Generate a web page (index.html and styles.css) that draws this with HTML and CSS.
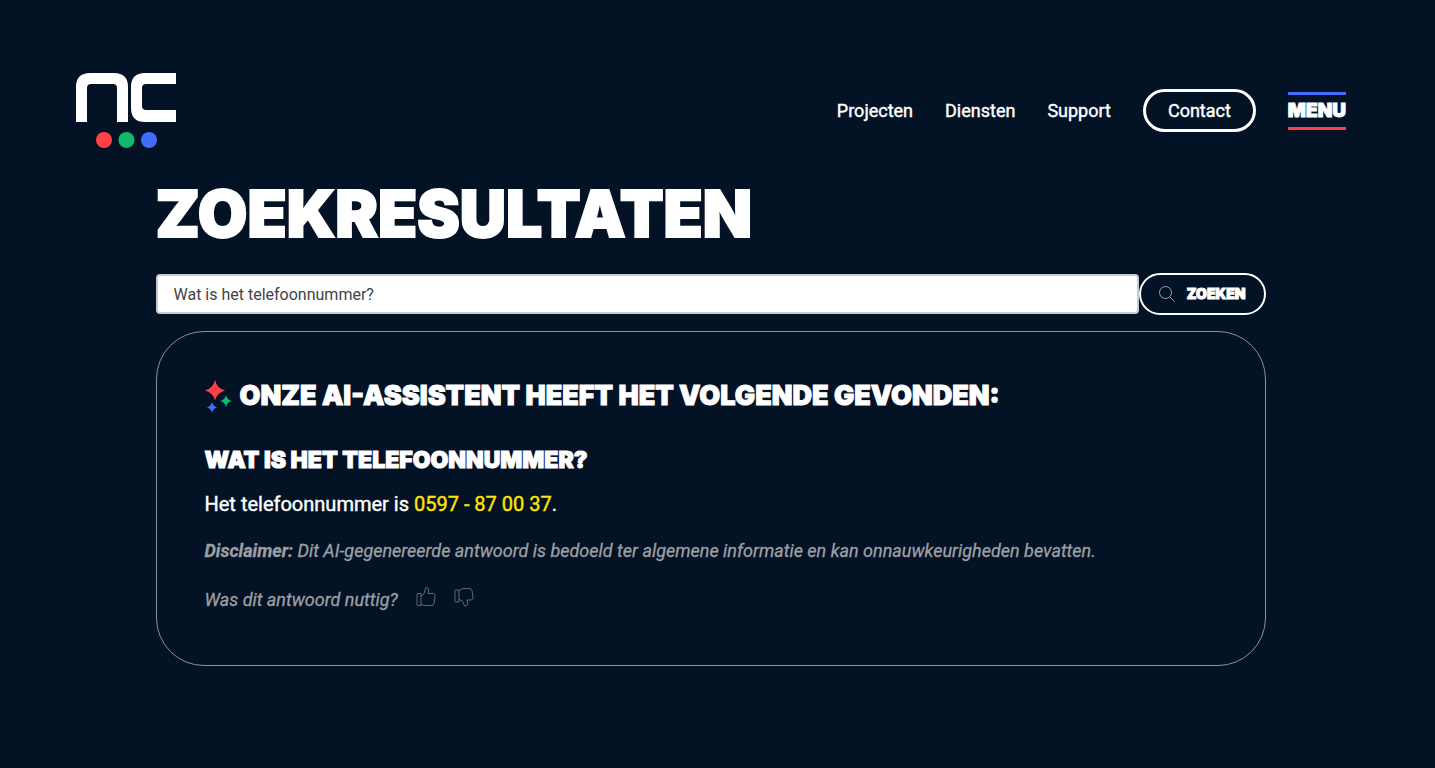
FILE: index.html
```
<!DOCTYPE html>
<html lang="nl">
<head>
    <meta charset="UTF-8">
    <meta name="viewport" content="width=device-width, initial-scale=1">
    <title>Zoekresultaten</title>
    <link rel="stylesheet" href="styles.css">
</head>
<body>

    <header class="header">
        <a class="logo" href="#" aria-label="Home">
            <svg width="100" height="75" viewBox="0 0 100 75">
                <path fill="#fff" d="M0 49V14Q0 0 14 0H38Q52 0 52 14V49H41V15Q41 11 37 11H15Q11 11 11 15V49Z"/>
                <path fill="#fff" d="M100 0V11H70Q66 11 66 15V33Q66 37 70 37H100V49H69Q55 49 55 35V14Q55 0 69 0Z"/>
                <circle cx="28" cy="67" r="8" fill="#ff4044"/>
                <circle cx="50.500" cy="67" r="8" fill="#10b96c"/>
                <circle cx="73" cy="67" r="8" fill="#446bff"/>
            </svg>
        </a>
        <nav class="nav">
            <a href="#">Projecten</a>
            <a href="#">Diensten</a>
            <a href="#">Support</a>
            <a class="contact" href="#">Contact</a>
            <button class="menu" type="button">Menu</button>
        </nav>
    </header>

    <main class="container">
        <h1>Zoekresultaten</h1>

        <form class="search">
            <input type="text" name="q" value="Wat is het telefoonnummer?" aria-label="Zoekopdracht">
            <button type="submit">
                <svg width="16" height="16" viewBox="0 0 16 16" fill="none" stroke="#fff" stroke-width=".6">
                    <circle cx="6.500" cy="6.500" r="6"/>
                    <path d="M11 11L15.500 15.500"/>
                </svg>
                Zoeken
            </button>
        </form>

        <section class="answer">
            <h2>
                <svg width="27" height="33" viewBox="0 0 27 33">
                    <path fill="#ff4044" d="M10 0Q12 8.500 20 10.500Q12 12.500 10 20.500Q8 12.500 0 10.500Q8 8.500 10 0Z"/>
                    <path fill="#10b96c" d="M21 15Q22.200 20 27 21Q22.200 22 21 27Q19.800 22 15 21Q19.800 20 21 15Z"/>
                    <path fill="#446bff" d="M7 22Q8 26 12 27.500Q8 28.500 7 33Q6 28.500 2 27.500Q6 26 7 22Z"/>
                </svg>
                <span>Onze AI-assistent heeft het volgende gevonden:</span>
            </h2>
            <h3>Wat is het telefoonnummer?</h3>
            <p class="text">Het telefoonnummer is <a href="tel:0597870037">0597 - 87 00 37</a>.</p>
            <p class="note"><strong>Disclaimer:</strong> Dit AI-gegenereerde antwoord is bedoeld ter algemene informatie en kan onnauwkeurigheden bevatten.</p>
            <div class="feedback">
                <span>Was dit antwoord nuttig?</span>
                <button type="button" aria-label="Ja">
                    <svg width="20" height="20" viewBox="0 0 20 20">
                        <path d="M1 7.500Q1 6.500 2 6.500H5V18.500H2Q1 18.500 1 17.500ZM5 9Q9 7.500 9 3Q9 .5 11 .5Q13.500 1 12 6.500H17.500Q19.500 7 19 9.500L18 16.500Q17.500 18.500 15.500 18.500H9Q7 18.500 5 17"/>
                    </svg>
                </button>
                <button type="button" aria-label="Nee">
                    <svg width="20" height="20" viewBox="0 0 20 20">
                        <path d="M1 4Q1 3 2 3H5V15H2Q1 15 1 14ZM5 4Q7 1.500 10 1.500H15Q17.500 1.500 18 3.500L19 10Q19.500 12.500 17 13H13Q14.500 18.500 12 19Q10 19.500 9.500 16.500Q9 13 5 12.500"/>
                    </svg>
                </button>
            </div>
        </section>
    </main>

</body>
</html>
```
FILE: styles.css
```
* {
    box-sizing: border-box;
    margin: 0;
    padding: 0;
}
body {
    padding-right: 14px;
    background-color: #031225;
    color: #fff;
    font-family: Roboto, "Liberation Sans", sans-serif;
    font-size: 18px;
    line-height: 27px;
}
a {
    color: inherit;
    text-decoration: none;
}
svg {
    display: block;
    flex: none;
}
button {
    background: none;
    border: 0;
    color: inherit;
    cursor: pointer;
}
h1, h2, h3, .menu, .search button {
    font-family: Inter, "Liberation Sans", sans-serif;
    font-weight: 900;
    text-transform: uppercase;
    -webkit-text-stroke: 1px #fff;
}

/* header */
.header {
    display: flex;
    justify-content: space-between;
    align-items: center;
    padding: 73px 75px 0 76px;
}
.nav {
    display: flex;
    align-items: center;
    gap: 32px;
    -webkit-text-stroke: 0.4px;
}
.contact {
    padding: 5px 22px;
    border: 3px solid #fff;
    border-radius: 24px;
}
.menu {
    border-top: 3px solid #446bff;
    border-bottom: 3px solid #ff4044;
    font-size: 19px;
    line-height: 32px;
}

/* content */
.container {
    width: 100%;
    max-width: 1138px;
    margin: 0 auto;
    padding: 26px 14px;
}
h1 {
    font-size: 64px;
    line-height: 80px;
    -webkit-text-stroke-width: 2px;
}
.search {
    display: flex;
    align-items: center;
    margin: 19px 0 16px;
}
.search input {
    flex: 1;
    min-width: 0;
    height: 40px;
    padding: 0 16px;
    border: 2px solid #c5cad8;
    border-radius: 4px;
    background: #fff;
    color: #414347;
    font: 16px/24px Roboto, "Liberation Sans", sans-serif;
}
.search button {
    display: flex;
    align-items: center;
    gap: 12px;
    padding: 8px 18px;
    border: 2px solid #fff;
    border-radius: 24px;
    font-size: 14px;
    line-height: 22px;
}
.answer {
    padding: 47px 48px 52px;
    border: 1px solid #8b919b;
    border-radius: 48px;
}
h2 {
    display: flex;
    align-items: center;
    gap: 8px;
    font-size: 27px;
    line-height: 34px;
}
h3 {
    margin: 32px 0 16px;
    font-size: 23px;
    line-height: 30px;
}
.text {
    font-size: 20px;
    line-height: 26px;
    -webkit-text-stroke: 0.4px;
}
.text a {
    color: #ffe600;
}
.note, .feedback {
    margin-top: 20px;
    color: #9d9fa3;
    font-style: italic;
    -webkit-text-stroke: 0.3px;
}
.feedback {
    display: flex;
    align-items: flex-start;
    gap: 18px;
    margin-top: 22px;
}
.feedback button {
    padding-top: 1px;
}
.feedback path {
    fill: none;
    stroke: #a1a3a7;
    stroke-width: 0.6;
}
```
